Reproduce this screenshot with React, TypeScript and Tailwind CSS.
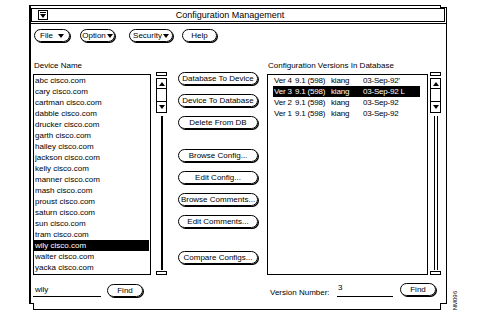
import React from 'react'

const devices = [
  'abc',
  'cary',
  'cartman',
  'dabble',
  'drucker',
  'garth',
  'halley',
  'jackson',
  'kelly',
  'manner',
  'mash',
  'proust',
  'saturn',
  'sun',
  'tram',
  'wily',
  'walter',
  'yacka',
]

const versions = [
  { ver: 'Ver 4', rel: '9.1 (598)', user: 'kiang', date: "03-Sep-92'" },
  { ver: 'Ver 3', rel: '9.1 (598)', user: 'kiang', date: '03-Sep-92 L' },
  { ver: 'Ver 2', rel: '9.1 (598)', user: 'kiang', date: '03-Sep-92' },
  { ver: 'Ver 1', rel: '9.1 (598)', user: 'kiang', date: '03-Sep-92' },
]

function Down({ className = '' }: { className?: string }) {
  return (
    <svg width="6" height="4" viewBox="0 0 6 4" className={className}>
      <path d="M0 0H6L3 4Z" fill="black" />
    </svg>
  )
}

function Up() {
  return (
    <svg width="6" height="4" viewBox="0 0 6 4">
      <path d="M0 4H6L3 0Z" fill="black" />
    </svg>
  )
}

function Pill({
  children,
  className = '',
}: {
  children: React.ReactNode
  className?: string
}) {
  return (
    <div
      className={`flex items-center justify-center rounded-full border border-black shadow-[1px_1px_0_#000] text-[8px] leading-none whitespace-nowrap ${className}`}
    >
      {children}
    </div>
  )
}

function ScrollBar({ double }: { double?: boolean }) {
  return (
    <div className="flex flex-col items-center w-[11px] h-[203px]">
      <div className="w-[11px] h-[4px] border border-black" />
      <div className="mt-[2px] w-[11px] h-[35px] border border-black flex flex-col">
        <div className="h-[10px] border-b border-black flex items-center justify-center">
          <Up />
        </div>
        <div className="flex-1" />
        <div className="h-[11px] border-t border-black flex items-center justify-center">
          <Down />
        </div>
      </div>
      {double ? (
        <div className="mt-[3px] flex-1 w-[4px] border-x border-black" />
      ) : (
        <div className="mt-[3px] flex-1 w-[2px] bg-black" />
      )}
      <div className="mt-[1px] w-[11px] h-[4px] border border-black" />
    </div>
  )
}

export default function App(): React.JSX.Element {
  return (
    <div className="w-[483px] h-[322px] bg-white text-black font-['Liberation_Sans',sans-serif] flex">
      <div className="relative ml-[29px] mt-[5px] w-[418px] h-[305px] border-t border-r border-b border-l-2 border-black flex flex-col">
        {/* title bar */}
        <div className="mt-[2px] mr-[1px] h-[14px] border border-black flex items-center">
          <div className="ml-[6px] w-[10px] h-[10px] border border-black flex flex-col items-center justify-center">
            <div className="w-[6px] h-px bg-black mb-px" />
            <Down />
          </div>
          <div className="flex-1 text-center text-[9px] leading-none pr-[32px]">
            Configuration Management
          </div>
        </div>
        <div className="mt-[1px] h-px bg-black" />

        {/* menu buttons */}
        <div className="mt-[5px] pl-[3px] flex">
          <Pill className="w-[36px] h-[13px] gap-[5px]">
            File <Down />
          </Pill>
          <Pill className="ml-[10px] w-[35px] h-[13px] gap-[1px]">
            Option <Down />
          </Pill>
          <Pill className="ml-[14px] w-[44px] h-[13px] gap-[1px]">
            Security <Down />
          </Pill>
          <Pill className="ml-[9px] w-[35px] h-[13px]">Help</Pill>
        </div>

        <div className="mt-[20px] pl-[2px] flex">
          {/* device list */}
          <div className="flex flex-col">
            <div className="ml-[1px] h-[8px] text-[8px] leading-[8px]">Device Name</div>
            <div className="mt-[2px] flex">
              <div className="mt-[2px] w-[118px] h-[201px] border border-black">
                {devices.map((d) => (
                  <div
                    key={d}
                    className={`h-[11px] pl-[1px] text-[8px] leading-[11px] ${
                      d === 'wily' ? 'bg-black text-white mr-[1px]' : ''
                    }`}
                  >
                    {d} cisco.com
                  </div>
                ))}
              </div>
              <div className="ml-[5px]">
                <ScrollBar />
              </div>
            </div>
            <div className="mt-[9px] flex items-start">
              <div className="w-[68px] h-[13px] border-b border-black pl-[2px] pb-[2px] flex items-end text-[8px] leading-none">
                wily
              </div>
              <Pill className="ml-[6px] w-[36px] h-[13px]">Find</Pill>
            </div>
          </div>

          {/* action buttons */}
          <div className="ml-[11px] flex flex-col">
            <Pill className="mt-[10px] w-[80px] h-[13px]">Database To Device</Pill>
            <Pill className="mt-[9px] w-[80px] h-[13px]">Device To Database</Pill>
            <Pill className="mt-[9px] w-[80px] h-[13px]">Delete From DB</Pill>
            <Pill className="mt-[20px] w-[80px] h-[13px]">Browse Config...</Pill>
            <Pill className="mt-[9px] w-[80px] h-[13px]">Edit Config...</Pill>
            <Pill className="mt-[9px] w-[80px] h-[13px]">Browse Comments...</Pill>
            <Pill className="mt-[9px] w-[80px] h-[13px]">Edit Comments...</Pill>
            <Pill className="mt-[23px] w-[80px] h-[13px]">Compare Configs...</Pill>
          </div>

          {/* versions list */}
          <div className="ml-[9px] flex flex-col">
            <div className="ml-[1px] h-[8px] text-[8px] leading-[8px]">
              Configuration Versions In Database
            </div>
            <div className="mt-[2px] flex">
              <div className="mt-[2px] w-[161px] h-[201px] border border-black">
                {versions.map((v) => (
                  <div
                    key={v.ver}
                    className={`ml-[5px] w-[147px] h-[11px] pl-[1px] flex text-[8px] leading-[11px] tracking-[-0.2px] whitespace-nowrap ${
                      v.ver === 'Ver 3' ? 'bg-black text-white' : ''
                    }`}
                  >
                    <span className="w-[21px]">{v.ver}</span>
                    <span className="w-[36px]">{v.rel}</span>
                    <span className="w-[32px]">{v.user}</span>
                    <span>{v.date}</span>
                  </div>
                ))}
              </div>
              <div className="ml-[2px]">
                <ScrollBar double />
              </div>
            </div>
            <div className="mt-[8px] flex items-start">
              <div className="ml-[3px] mt-[6px] w-[67px] text-[8px] leading-none whitespace-nowrap">
                Version Number:
              </div>
              <div className="w-[56px] h-[14px] border-b border-black pl-[1px] text-[8px] leading-[9px]">
                3
              </div>
              <Pill className="ml-[7px] w-[36px] h-[13px]">Find</Pill>
            </div>
          </div>
        </div>

        {/* resize corners */}
        <div className="absolute -right-px -top-px w-[7px] h-[3px] bg-white border-b border-l border-black" />
        <div className="absolute -left-[2px] -bottom-px w-[5px] h-[7px] bg-white border-t border-r border-black" />
        <div className="absolute -right-px -bottom-px w-[7px] h-[7px] bg-white border-t border-l border-black" />
      </div>

      <div className="ml-[5px] self-end mb-[12px] text-[6px] leading-none [writing-mode:vertical-rl] rotate-180">
        NM096
      </div>
    </div>
  )
}
